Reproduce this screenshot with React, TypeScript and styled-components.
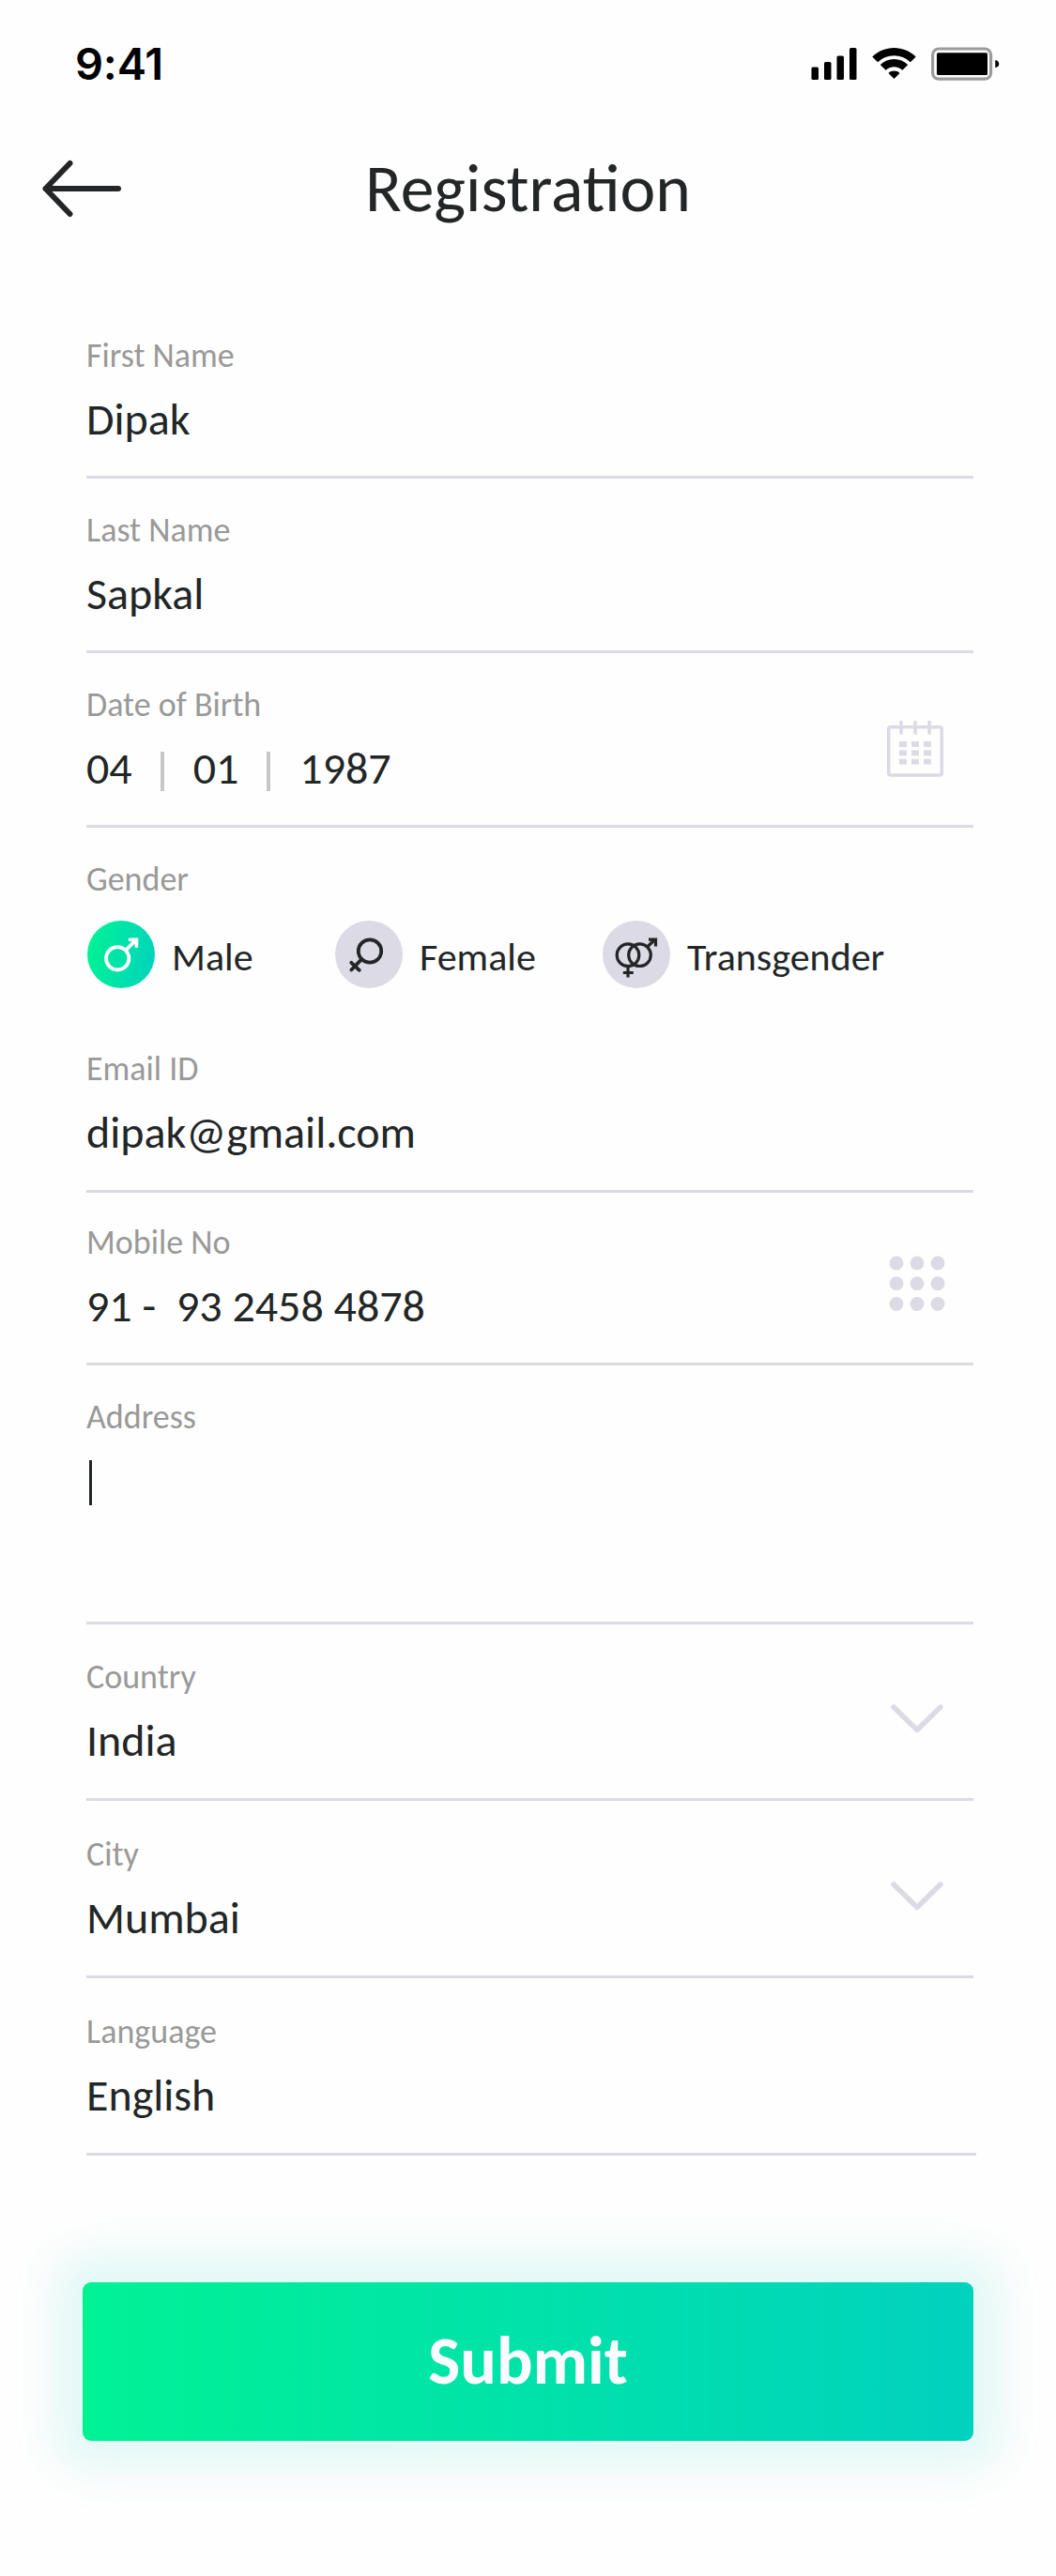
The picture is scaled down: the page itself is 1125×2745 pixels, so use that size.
import React from "react";
import styled, { createGlobalStyle } from "styled-components";

const Global = createGlobalStyle`
  *, *::before, *::after { box-sizing: border-box; }
  body { margin: 0; background: #fefefe; }
`;

const muted = "#dbdae5";
const ink = "#222626";
const textFont = `Carlito, Calibri, "Open Sans", sans-serif`;

const Screen = styled.main`
  width: 1125px;
  height: 2745px;
  display: flex;
  flex-direction: column;
  background: #fefefe;
  color: ${ink};
  font-family: ${textFont};
  overflow: hidden;
`;

const StatusBar = styled.header`
  height: 136px;
  padding: 0 59px 0 80px;
  display: flex;
  align-items: center;
  justify-content: space-between;
`;

const Clock = styled.time`
  font: 600 47px/56px Inter, sans-serif;
  letter-spacing: -0.2px;
  color: #000;
`;

const StatusIcons = styled.div`
  display: flex;
  align-items: center;
  gap: 16px;
  svg { display: block; }
`;

const NavBar = styled.nav`
  height: 128px;
  padding: 2px 45px 0;
  display: grid;
  grid-template-columns: 90px 1fr 90px;
  align-items: center;
`;

const BackButton = styled.button`
  border: 0;
  padding: 0;
  background: none;
  display: flex;
`;

const Title = styled.h1`
  margin: 0;
  text-align: center;
  font-size: 71.6px;
  line-height: 80px;
  font-weight: 400;
  white-space: nowrap;
`;

const Form = styled.form`
  margin: 60px 88px 0 92px;
  display: flex;
  flex-direction: column;
`;

const Field = styled.div<{ $height: number; $top?: number; $last?: boolean }>`
  height: ${(p) => p.$height}px;
  padding-top: ${(p) => p.$top ?? 35}px;
  border-bottom: 3px solid ${muted};
  margin-right: ${(p) => (p.$last ? -3 : 0)}px;
  display: flex;
  justify-content: space-between;
`;

const GenderField = styled.div`
  height: 202px;
  padding-top: 35px;
`;

const FieldBody = styled.div`
  display: flex;
  flex-direction: column;
  gap: 23px;
`;

const Label = styled.span`
  font-size: 36px;
  line-height: 40px;
  color: #999;
  white-space: pre;
`;

const Value = styled.span`
  font-size: 48px;
  line-height: 50px;
  white-space: pre;
`;

const DateRow = styled.div`
  display: flex;
`;

const Divider = styled.i`
  width: 4px;
  height: 42px;
  margin: 7px 31px 0 30px;
  background: #c6c6c8;
`;

const Caret = styled.i`
  width: 3px;
  height: 48px;
  margin: 3px 0 0 3px;
  background: ${ink};
`;

const Adornment = styled.div<{ $offset: number }>`
  margin: ${(p) => p.$offset}px 29px 0 0;
  svg { display: block; }
`;

const Options = styled.div`
  display: grid;
  grid-template-columns: 264px 285px auto;
  justify-content: start;
  margin: 24px 0 0 1px;
`;

const Option = styled.label`
  display: flex;
  align-items: center;
  gap: 18px;
`;

const Badge = styled.span<{ $active?: boolean }>`
  width: 72px;
  height: 72px;
  border-radius: 50%;
  background: ${(p) => (p.$active ? "linear-gradient(100deg, #00f295 5%, #00d2be 100%)" : muted)};
  color: ${(p) => (p.$active ? "#fff" : ink)};
  svg { display: block; }
`;

const OptionText = styled.span`
  font-size: 42px;
  line-height: 50px;
  margin-top: 6px;
`;

const SubmitButton = styled.button`
  margin: 135px 88px 0;
  padding: 0 0 3px;
  height: 169px;
  flex: none;
  border: 0;
  border-radius: 9px;
  background: linear-gradient(90deg, #00f295, #00d2be);
  box-shadow: 0 0 48px 30px rgba(0, 200, 175, 0.115);
  color: #fbfbff;
  font: 700 72px/80px ${textFont};
`;

const Signal = () => (
  <svg width="49" height="36" viewBox="0 0 49 36">
    <rect x="0.5" y="21.5" width="7.5" height="13.5" rx="1.5" />
    <rect x="14" y="16" width="7.5" height="19" rx="1.5" />
    <rect x="27.5" y="9.5" width="7.5" height="25.5" rx="1.5" />
    <rect x="41" y="1" width="7.5" height="34" rx="1.5" />
  </svg>
);

const Wifi = () => (
  <svg width="47" height="36" viewBox="0 0 47 36">
    <path d="M23.5 1C32.4 1 40.4 4.4 46.7 10.5L40.9 16.3A25 25 0 0 0 6.1 16.3L0.3 10.5C6.6 4.4 14.6 1 23.5 1Z" />
    <path d="M23.5 13C29.2 13 34.3 15.2 38.2 19L32.4 24.8A12.7 12.7 0 0 0 14.6 24.8L8.8 19C12.7 15.2 17.8 13 23.5 13Z" />
    <path d="M23.5 25.6C25.8 25.6 27.9 26.4 29.5 28L23.5 34L17.5 28C19.1 26.4 21.2 25.6 23.5 25.6Z" />
  </svg>
);

const Battery = () => (
  <svg width="74" height="36" viewBox="0 0 74 36">
    <rect x="1.6" y="2" width="62" height="32.2" rx="6.5" fill="none" stroke="#9c9c9c" strokeWidth="3.2" />
    <rect x="6" y="6.3" width="54" height="23.7" rx="1.5" />
    <path d="M68.3 14C73.6 15 73.6 21.2 68.3 22.2Z" />
  </svg>
);

const BackArrow = () => (
  <svg width="86" height="64" viewBox="0 0 86 64" fill="none" stroke={ink} strokeWidth="6" strokeLinecap="round" strokeLinejoin="round">
    <path d="M81 32H3.5M29.5 5L3.5 32L29.5 59" />
  </svg>
);

const Calendar = () => (
  <svg width="64" height="62" viewBox="0 0 64 62" fill="none" stroke={muted} strokeWidth="3.5">
    <rect x="2.7" y="7.7" width="56.6" height="51.3" rx="2" />
    <path d="M16 1V15.5M31 1V15.5M46 1V15.5" />
    <path d="M14 26h8m5 0h8m5 0h8M14 35.3h8m5 0h8m5 0h8M14 44.7h8m5 0h8m5 0h8" strokeWidth="5.8" />
  </svg>
);

const Keypad = () => (
  <svg width="64" height="62" viewBox="0 0 64 62" fill={muted}>
    {[9, 30.7, 52.5].map((y) => [11, 33, 55].map((x) => <circle key={`${x}-${y}`} cx={x} cy={y} r="7.4" />))}
  </svg>
);

const Chevron = () => (
  <svg width="64" height="34" viewBox="0 0 64 34" fill="none" stroke={muted} strokeWidth="5.4" strokeLinecap="round" strokeLinejoin="round">
    <path d="M8 4L33 28.5L58 4" />
  </svg>
);

const Male = () => (
  <svg width="72" height="72" viewBox="0 0 72 72" fill="none" stroke="currentColor" strokeWidth="3.8" strokeLinecap="round">
    <circle cx="32.2" cy="40.3" r="12.2" />
    <path d="M41 31.5L51.5 21M45.5 20.3H52.4V27.2" />
  </svg>
);

const Female = () => (
  <svg width="72" height="72" viewBox="0 0 72 72" fill="none" stroke="currentColor" strokeWidth="3.8" strokeLinecap="round">
    <circle cx="37" cy="32.5" r="12.2" />
    <path d="M28.3 41.2L17.3 52.5M17.3 44.8L25.8 52.8" />
  </svg>
);

const Transgender = () => (
  <svg width="72" height="72" viewBox="0 0 72 72" fill="none" stroke="currentColor" strokeWidth="3.2">
    <circle cx="27" cy="36.7" r="11.8" />
    <circle cx="39.5" cy="36.7" r="11.8" />
    <path d="M27 48.5V60.5M21.8 55.5H32.8M47.5 28L56 20M49 20.2H56.5V27.5" />
  </svg>
);

export default function App() {
  return (
    <Screen>
      <Global />
      <StatusBar>
        <Clock>9:41</Clock>
        <StatusIcons>
          <Signal />
          <Wifi />
          <Battery />
        </StatusIcons>
      </StatusBar>
      <NavBar>
        <BackButton type="button" aria-label="Back"><BackArrow /></BackButton>
        <Title>Registration</Title>
      </NavBar>
      <Form>
        <Field $height={186}>
          <FieldBody><Label>First Name</Label><Value>Dipak</Value></FieldBody>
        </Field>
        <Field $height={186}>
          <FieldBody><Label>Last Name</Label><Value>Sapkal</Value></FieldBody>
        </Field>
        <Field $height={186}>
          <FieldBody>
            <Label>Date of Birth</Label>
            <DateRow>
              <Value>04</Value><Divider /><Value>01</Value><Divider /><Value>1987</Value>
            </DateRow>
          </FieldBody>
          <Adornment $offset={36}><Calendar /></Adornment>
        </Field>
        <GenderField>
          <Label as="div">Gender</Label>
          <Options>
            <Option><Badge $active><Male /></Badge><OptionText>Male</OptionText></Option>
            <Option><Badge><Female /></Badge><OptionText>Female</OptionText></Option>
            <Option><Badge><Transgender /></Badge><OptionText>Transgender</OptionText></Option>
          </Options>
        </GenderField>
        <Field $height={187}>
          <FieldBody><Label>Email ID</Label><Value>dipak@gmail.com</Value></FieldBody>
        </Field>
        <Field $height={184} $top={33}>
          <FieldBody><Label>Mobile No</Label><Value>91 -  93 2458 4878</Value></FieldBody>
          <Adornment $offset={33}><Keypad /></Adornment>
        </Field>
        <Field $height={276}>
          <FieldBody><Label>Address</Label><Caret /></FieldBody>
        </Field>
        <Field $height={188} $top={36}>
          <FieldBody><Label>Country</Label><Value>India</Value></FieldBody>
          <Adornment $offset={48}><Chevron /></Adornment>
        </Field>
        <Field $height={189} $top={37}>
          <FieldBody><Label>City</Label><Value>Mumbai</Value></FieldBody>
          <Adornment $offset={48}><Chevron /></Adornment>
        </Field>
        <Field $height={189} $top={37} $last>
          <FieldBody><Label>Language</Label><Value>English</Value></FieldBody>
        </Field>
      </Form>
      <SubmitButton type="button">Submit</SubmitButton>
    </Screen>
  );
}
